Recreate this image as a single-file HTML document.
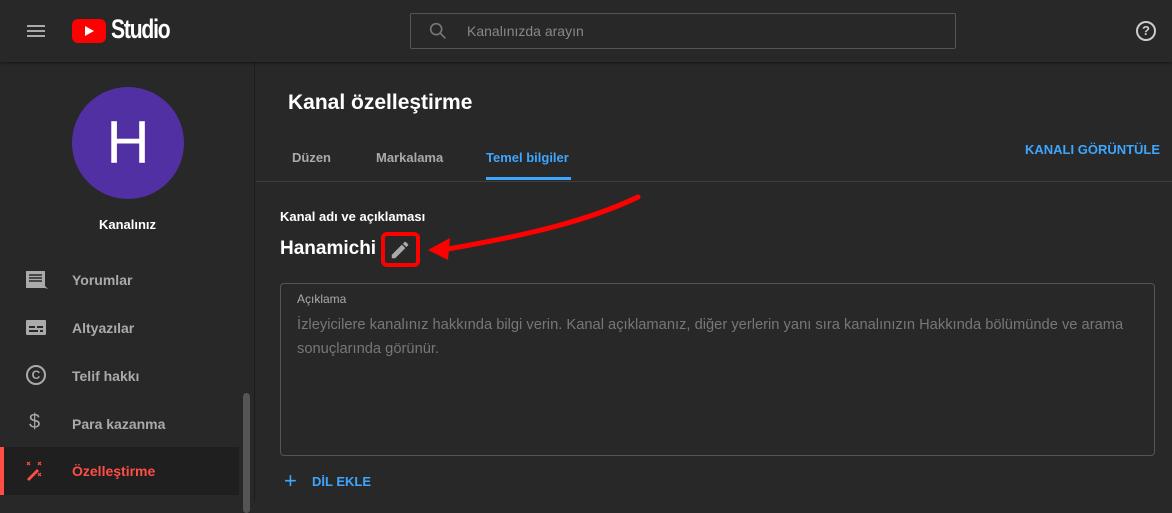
<!DOCTYPE html>
<html><head><meta charset="utf-8"><style>
*{margin:0;padding:0;box-sizing:border-box}
body{width:1172px;height:502px;overflow:hidden;background:#282828;font-family:"Liberation Sans",sans-serif;color:#fff;position:relative}
.hdr{position:absolute;left:0;top:0;width:1172px;height:62px;background:#282828;box-shadow:0 1px 3px rgba(0,0,0,.5);z-index:2}
.side{position:absolute;left:0;top:62px;width:255px;height:440px;border-right:1px solid #1c1c1c}
.abs{position:absolute}
.nav{position:absolute;left:72px;font-size:14px;font-weight:bold;color:#aaa}
.ic{position:absolute;left:24px}
</style></head><body>
<div class="hdr">
  <div class="abs" style="left:27px;top:25px;width:18px;height:2px;background:#aaa;box-shadow:0 5px 0 #aaa,0 10px 0 #aaa"></div>
  <div class="abs" style="left:72px;top:19px;width:34px;height:24px;background:#f00;border-radius:6px"></div>
  <div class="abs" style="left:85px;top:26px;width:0;height:0;border-left:9px solid #fff;border-top:5px solid transparent;border-bottom:5px solid transparent"></div>
  <div class="abs" style="left:111px;top:14px;font-size:27px;font-weight:bold;letter-spacing:-1.5px;transform:scaleX(.78);transform-origin:left">Studio</div>
  <div class="abs" style="left:410px;top:13px;width:546px;height:36px;border:1px solid #555;border-radius:2px"></div>
  <svg class="abs" style="left:427px;top:20px" width="22" height="22" viewBox="0 0 24 24"><circle cx="10" cy="10" r="6" fill="none" stroke="#777" stroke-width="1.8"/><path d="M14.5 14.5L20 20" stroke="#777" stroke-width="1.8"/></svg>
  <div class="abs" style="left:467px;top:23px;font-size:14px;color:#888">Kanalınızda arayın</div>
  <div class="abs" style="left:1136px;top:21px;width:20px;height:20px;border:2px solid #ccc;border-radius:50%;font-size:13px;font-weight:bold;color:#ccc;text-align:center;line-height:16px">?</div>
</div>
<div class="side">
  <div class="abs" style="left:72px;top:25px;width:112px;height:112px;border-radius:50%;background:#5130a4;font-size:60px;text-align:center;line-height:112px">H</div>
  <div class="abs" style="left:0;width:255px;top:155px;text-align:center;font-size:13px;font-weight:bold">Kanalınız</div>
  <svg class="ic" style="top:206px" width="24" height="24" viewBox="0 0 24 24"><path d="M2 3h19v15l3 3-3-1H2z" fill="#aaa"/><path d="M5 7h13M5 10h13M5 13h13" stroke="#282828" stroke-width="1.5"/></svg>
  <div class="nav" style="top:210px">Yorumlar</div>
  <svg class="ic" style="top:254px" width="24" height="24" viewBox="0 0 24 24"><rect x="2" y="4" width="20" height="15" rx="1" fill="#aaa"/><path d="M5 11h6M13 11h6M5 15h9M16 15h3" stroke="#282828" stroke-width="2"/></svg>
  <div class="nav" style="top:258px">Altyazılar</div>
  <div class="ic" style="top:303px;left:26px;width:20px;height:20px;border:2px solid #aaa;border-radius:50%;font-size:12px;font-weight:bold;color:#aaa;text-align:center;line-height:16px">C</div>
  <div class="nav" style="top:306px">Telif hakkı</div>
  <div class="ic" style="top:349px;left:29px;font-size:20px;color:#aaa">$</div>
  <div class="nav" style="top:354px">Para kazanma</div>
  <div class="abs" style="left:0;top:385px;width:239px;height:48px;background:#1f1f1f"></div>
  <div class="abs" style="left:0;top:385px;width:4px;height:48px;background:#ff4e45"></div>
  <svg class="ic" style="top:397px" width="24" height="24" viewBox="0 0 24 24"><path d="M3 20l10-10 2 2-10 10z" fill="#ff4e45"/><path d="M3 3l3 3M6 3L3 6M14 3l3 3M17 3l-3 3M14 14l3 3M17 14l-3 3" stroke="#ff4e45" stroke-width="1.2"/></svg>
  <div class="nav" style="top:401px;color:#ff4e45;font-size:14px">Özelleştirme</div>
  <div class="abs" style="left:243px;top:331px;width:7px;height:120px;background:#555;border-radius:4px"></div>
</div>
<div class="abs" style="left:288px;top:91px;font-size:21px;font-weight:bold">Kanal özelleştirme</div>
<div class="abs" style="left:292px;top:150px;font-size:13px;font-weight:bold;color:#aaa">Düzen</div>
<div class="abs" style="left:376px;top:150px;font-size:13px;font-weight:bold;color:#aaa">Markalama</div>
<div class="abs" style="left:486px;top:150px;font-size:13px;font-weight:bold;color:#3ea6ff">Temel bilgiler</div>
<div class="abs" style="left:486px;top:177px;width:85px;height:3px;background:#3ea6ff"></div>
<div class="abs" style="left:256px;top:181px;width:916px;height:1px;background:#3e3e3e"></div>
<div class="abs" style="left:1025px;top:142px;font-size:13px;font-weight:bold;color:#3ea6ff">KANALI GÖRÜNTÜLE</div>
<div class="abs" style="left:280px;top:209px;font-size:13px;font-weight:bold">Kanal adı ve açıklaması</div>
<div class="abs" style="left:280px;top:238px;font-size:19px;font-weight:bold">Hanamichi</div>
<svg class="abs" style="left:389px;top:239px" width="22" height="22" viewBox="0 0 24 24"><path d="M3 17.25V21h3.75L17.81 9.94l-3.75-3.75L3 17.25zM20.71 7.04a1 1 0 000-1.41l-2.34-2.34a1 1 0 00-1.41 0l-1.83 1.83 3.75 3.75 1.83-1.83z" fill="#aaa"/></svg>
<div class="abs" style="left:381px;top:232px;width:39px;height:35px;border:4px solid #f00;border-radius:6px"></div>
<svg class="abs" style="left:420px;top:190px" width="250" height="80"><path d="M218 7 C170 30 110 45 22 60" fill="none" stroke="#f00" stroke-width="5" stroke-linecap="round"/><path d="M8 60 L30 48 L28 70 Z" fill="#f00"/></svg>
<div class="abs" style="left:280px;top:283px;width:875px;height:173px;border:1px solid #555;border-radius:4px"></div>
<div class="abs" style="left:297px;top:292px;font-size:12px;color:#aaa">Açıklama</div>
<div class="abs" style="left:297px;top:313px;width:850px;font-size:14.7px;line-height:24px;color:#777">İzleyicilere kanalınız hakkında bilgi verin. Kanal açıklamanız, diğer yerlerin yanı sıra kanalınızın Hakkında bölümünde ve arama sonuçlarında görünür.</div>
<div class="abs" style="left:284px;top:470px;font-size:22px;color:#3ea6ff;line-height:22px">+</div>
<div class="abs" style="left:312px;top:474px;font-size:13px;font-weight:bold;color:#3ea6ff">DİL EKLE</div>
</body></html>
